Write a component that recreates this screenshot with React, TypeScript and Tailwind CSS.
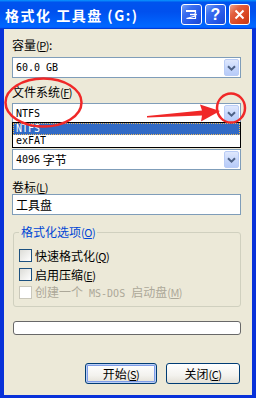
import React from "react";

const cjk = "font-['Noto_Sans_CJK_SC',sans-serif]";
const mono = "font-['DejaVu_Sans_Mono','Noto_Sans_CJK_SC',monospace] text-[10px] leading-[10px]";

// underlined access key, e.g. (P)
function Key({ k }: { k: string }) {
  return (
    <span className="text-[11px] tracking-[-0.5px]">
      (<span className="underline underline-offset-1">{k}</span>)
    </span>
  );
}

function DropButton() {
  return (
    <div className="flex h-[17px] w-[15px] items-center justify-center rounded-[2px] border border-[#B9CCF6] bg-[linear-gradient(180deg,#dfe8fd,#c4d5fb_60%,#b7cbf8)]">
      <svg width="9" height="6" viewBox="0 0 9 6">
        <path d="M1 1.2 L4.5 4.6 L8 1.2" fill="none" stroke="#4D6185" strokeWidth="2" />
      </svg>
    </div>
  );
}

function Combo({ children, className = "" }: { children: React.ReactNode; className?: string }) {
  return (
    <div className={`flex h-[21px] items-center border border-[#7F9DB9] bg-white pl-[3px] pr-[1px] ${className}`}>
      <div className="flex flex-1 items-center text-[12px] leading-[12px]">{children}</div>
      <DropButton />
    </div>
  );
}

function Check({ label, k, disabled = false, className = "" }: { label: string; k: string; disabled?: boolean; className?: string }) {
  return (
    <div className={`flex h-[13px] items-center gap-[3px] ${className}`}>
      <div
        className={
          disabled
            ? "h-[13px] w-[13px] border border-[#CAC8BB] bg-white"
            : "h-[13px] w-[13px] border border-[#1C5180] bg-[linear-gradient(135deg,#dcdcd7,#ffffff)]"
        }
      />
      <span className={`text-[12px] leading-[12px] ${disabled ? "text-[#ACA899]" : "text-black"}`}>
        {label}
        {k === "M" ? <span className={mono}> MS-DOS </span> : null}
        {k === "M" ? "启动盘" : null}
        <Key k={k} />
      </span>
    </div>
  );
}

function XpButton({ label, k, def = false, w }: { label: string; k: string; def?: boolean; w: string }) {
  return (
    <button
      className={`h-[21px] ${w} rounded-[3px] border border-[#003C74] bg-[linear-gradient(180deg,#ffffff,#f3f2ee_60%,#e3e0d6)] text-[12px] leading-[12px] text-black ${
        def ? "shadow-[inset_0_0_0_1px_#bccff5,inset_0_0_0_2px_#7f9de8]" : ""
      }`}
    >
      {label}
      <Key k={k} />
    </button>
  );
}

export default function App() {
  return (
    <div className={`relative flex h-[398px] w-[256px] flex-col bg-[#0831D9] ${cjk}`}>
      {/* title bar */}
      <div className="flex h-[29px] shrink-0 items-center bg-[linear-gradient(180deg,#0997ff,#0053ee_8%,#0050ee_40%,#0066ff_88%,#0066ff_93%,#005bff_95%,#003dd7_96%,#003dd7)] pl-[5px] pr-[6px]">
        <span className="flex-1 text-[14px] font-bold leading-[14px] tracking-[1.5px] text-white">
          格式化 工具盘 (G:)
        </span>
        <div className="flex gap-[3px]">
          <div className="flex h-[21px] w-[21px] items-center justify-center rounded-[3px] border border-white bg-[linear-gradient(135deg,#7aa2f6,#3a6ef0_30%,#2456e6_70%,#1c48cf)]">
            <svg width="13" height="11" viewBox="0 0 13 11">
              <path d="M1.5 1.5 H10.5 V4 M10.5 7 V9.5 H1.5 Z" fill="none" stroke="#fff" strokeWidth="1.2" />
              <rect x="1" y="1" width="10" height="2" fill="#fff" />
              <path d="M5 5.5 H11.5" stroke="#fff" strokeWidth="1.4" />
              <path d="M9.5 3.5 L12 5.5 L9.5 7.5 Z" fill="#fff" />
            </svg>
          </div>
          <div className="flex h-[21px] w-[21px] items-center justify-center rounded-[3px] border border-white bg-[linear-gradient(135deg,#7aa2f6,#3a6ef0_30%,#2456e6_70%,#1c48cf)] font-['Liberation_Sans',sans-serif] text-[16px] font-bold leading-[16px] text-white">
            ?
          </div>
          <div className="flex h-[21px] w-[21px] items-center justify-center rounded-[3px] border border-white bg-[linear-gradient(135deg,#f0a48c,#e2603f_30%,#d8441f_70%,#c23a18)]">
            <svg width="11" height="11" viewBox="0 0 11 11">
              <path d="M1.5 1.5 L9.5 9.5 M9.5 1.5 L1.5 9.5" stroke="#fff" strokeWidth="2" />
            </svg>
          </div>
        </div>
      </div>

      {/* body */}
      <div className="mx-[4px] mb-[3px] flex flex-1 flex-col bg-[#ECE9D8] pl-[8px] pr-[11px] text-black">
        <div className="mt-[10px] text-[12px] leading-[12px]">
          容量<Key k="P" />:
        </div>
        <Combo className="mt-[6px]">
          <span className={mono}>60.0 GB</span>
        </Combo>

        <div className="mt-[8px] text-[12px] leading-[12px]">
          文件系统<Key k="F" />
        </div>
        <div className="relative z-10 mt-[5px]">
          <Combo>
            <span className={mono}>NTFS</span>
          </Combo>
          {/* open list */}
          <div className="absolute left-0 right-0 top-[19px] border border-black bg-white">
            <div className="flex h-[12px] items-center border border-dotted border-[#E8B860] bg-[#316AC5] pl-[2px] text-white">
              <span className={mono}>NTFS</span>
            </div>
            <div className="flex h-[12px] items-center pl-[3px]">
              <span className={mono}>exFAT</span>
            </div>
          </div>
        </div>

        {/* label row hidden behind the open list */}
        <div className="mt-[8px] h-[12px]" />
        <Combo className="mt-[5px]">
          <span className={mono}>4096 </span>
          <span>&nbsp;字节</span>
        </Combo>

        <div className="mt-[11px] text-[12px] leading-[12px]">
          卷标<Key k="L" />
        </div>
        <div className="mt-[1px] flex h-[21px] items-center border border-[#7F9DB9] bg-white pl-[3px] text-[12px] leading-[12px]">
          工具盘
        </div>

        <fieldset className="mt-[11px] ml-[1px] rounded-[3px] border border-[#D0D0BF] pb-[7px] pl-[5px] pt-[11px]">
          <legend className="px-[2px] text-[12px] leading-[12px] text-[#0046D5]">
            格式化选项<Key k="O" />
          </legend>
          <Check label="快速格式化" k="Q" />
          <Check label="启用压缩" k="E" className="mt-[6px]" />
          <Check label="创建一个" k="M" disabled className="mt-[5px]" />
        </fieldset>

        <div className="ml-[1px] mt-[14px] h-[14px] rounded-[3px] border border-[#686868] bg-white" />

        <div className="mr-[1px] mt-[28px] flex justify-end gap-[9px]">
          <XpButton label="开始" k="S" def w="w-[72px]" />
          <XpButton label="关闭" k="C" w="w-[74px]" />
        </div>
      </div>

      {/* red annotations */}
      <svg className="pointer-events-none absolute left-0 top-0 z-20" width="256" height="398" viewBox="0 0 256 398">
        <ellipse cx="43.5" cy="102.5" rx="38" ry="24" fill="none" stroke="#F02828" strokeWidth="2.5" />
        <ellipse cx="231" cy="108" rx="14" ry="14.5" fill="none" stroke="#F02828" strokeWidth="2.5" />
        <polygon points="147,116 202,110.5 200,104.5 220,111 201,121.5 202,115.5 147,117.5" fill="#F02828" />
      </svg>
    </div>
  );
}
